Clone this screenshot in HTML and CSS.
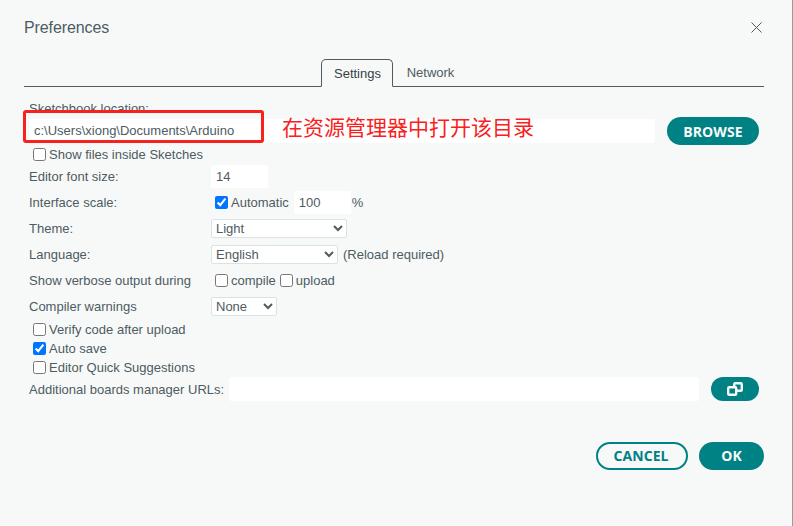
FILE: index.html
```html
<!DOCTYPE html>
<html lang="en">
<head>
  <meta charset="UTF-8"/>
  <title>Preferences</title>
  <link rel="stylesheet" href="styles.css">
</head>
<body>
  <div class="dialog">
    <header class="title-bar">
      <h1>Preferences</h1>
      <svg class="close-icon" width="11" height="11" viewBox="0 0 11 11">
        <path d="M.5.5l10 10M10.5.5l-10 10"/>
      </svg>
    </header>

    <nav class="tabs">
      <div class="tab active">Settings</div>
      <div class="tab network">Network</div>
    </nav>

    <main class="settings">
      <div class="location-label">Sketchbook location:</div>
      <div class="location-row">
        <input class="text-input location-input" type="text" value="c:\Users\xiong\Documents\Arduino">
        <button class="btn btn-primary browse-btn">BROWSE</button>
      </div>
      <label class="check-row first"><input type="checkbox"> Show files inside Sketches</label>

      <div class="row">
        <span class="row-label">Editor font size:</span>
        <input class="text-input small-input" type="text" value="14">
      </div>
      <div class="row">
        <span class="row-label">Interface scale:</span>
        <label class="inline-check"><input type="checkbox" checked> Automatic</label>
        <input class="text-input scale-input" type="text" value="100">
        <span class="percent">%</span>
      </div>
      <div class="row">
        <span class="row-label">Theme:</span>
        <select class="select theme-select"><option>Light</option></select>
      </div>
      <div class="row">
        <span class="row-label">Language:</span>
        <select class="select lang-select"><option>English</option></select>
        <span class="reload-note">(Reload required)</span>
      </div>
      <div class="row">
        <span class="row-label">Show verbose output during</span>
        <label class="inline-check"><input type="checkbox"> compile</label>
        <label class="inline-check upload"><input type="checkbox"> upload</label>
      </div>
      <div class="row">
        <span class="row-label">Compiler warnings</span>
        <select class="select warn-select"><option>None</option></select>
      </div>

      <div class="check-list">
        <label class="check-row"><input type="checkbox"> Verify code after upload</label>
        <label class="check-row"><input type="checkbox" checked> Auto save</label>
        <label class="check-row"><input type="checkbox"> Editor Quick Suggestions</label>
      </div>

      <div class="urls-row">
        <span class="urls-label">Additional boards manager URLs:</span>
        <input class="text-input urls-input" type="text">
        <button class="btn btn-primary icon-btn">
          <svg width="16" height="14" viewBox="0 0 16 14">
            <rect x="7.2" y="1.2" width="7.6" height="7.6" rx="1"/>
            <rect x="1.2" y="5.2" width="8" height="7.6" rx="1"/>
          </svg>
        </button>
      </div>
    </main>

    <footer class="actions">
      <button class="btn btn-outline">CANCEL</button>
      <button class="btn btn-primary ok-btn">OK</button>
    </footer>

    <!-- annotation drawn over the screenshot -->
    <div class="note-box"></div>
    <div class="note-text">在资源管理器中打开该目录</div>
  </div>
</body>
</html>
```

FILE: styles.css
```css
:root {
  --bg: #f7f9f9;
  --teal: #008184;
  --text: #4e5b61;
  --dark: #374146;
  --red: #f7211d;
}

* {
  box-sizing: border-box;
}

html, body {
  margin: 0;
  height: 100%;
}

body {
  background: var(--bg);
  color: var(--text);
  font-family: "Liberation Sans", Arial, sans-serif;
  font-size: 13px;
  overflow: hidden;
}

.dialog {
  position: relative;
  width: 793px;
  height: 526px;
  padding: 0 29px 0 24px;
  border-right: 1px solid #9a9a9a;
}

/* title */
.title-bar {
  display: flex;
  align-items: center;
  justify-content: space-between;
  height: 59px;
  padding-bottom: 5px;
  padding-right: 1px;
}
.title-bar h1 {
  margin: 2px 0 0;
  font-size: 16px;
  font-weight: 400;
  letter-spacing: -0.1px;
}
.close-icon path {
  fill: none;
  stroke: var(--text);
  stroke-width: 1;
}

/* tabs */
.tabs {
  display: flex;
  justify-content: center;
  height: 28px;
  width: 740px;
  border-bottom: 1px solid var(--text);
  padding-right: 3px;
}
.tab {
  width: 72px;
  height: 28px;
  line-height: 28px;
  text-align: center;
}
.tab.active {
  padding-left: 2px;
  color: var(--dark);
  background: var(--bg);
  border: 1px solid var(--text);
  border-bottom-color: var(--bg);
  border-radius: 5px 5px 0 0;
}
.tab.network {
  padding-left: 4px;
}

/* settings */
.settings {
  padding-left: 5px;
}
.location-label {
  height: 14px;
  margin-top: 15px;
  line-height: 14px;
}
.location-row {
  display: flex;
  align-items: center;
  height: 24px;
  margin-top: 3px;
}
.text-input {
  height: 24px;
  padding: 0 5px 2px;
  border: 0;
  border-radius: 2px;
  outline: 0;
  background: #fff;
  color: var(--text);
  font: inherit;
}
.location-input {
  width: 626px;
}
.browse-btn {
  width: 92px;
  height: 28px;
  margin-left: 12px;
}
.check-row {
  display: flex;
  align-items: center;
  gap: 3px;
  height: 19px;
  padding-left: 4px;
}
.check-row.first {
  height: 18px;
  margin-top: 2px;
}
input[type="checkbox"] {
  width: 13px;
  height: 13px;
  margin: 0;
}
.row {
  display: flex;
  align-items: center;
  height: 26px;
}
.row-label {
  width: 182px;
  flex-shrink: 0;
}
.inline-check {
  display: flex;
  align-items: center;
  gap: 3px;
  margin-left: 4px;
}
.small-input {
  width: 57px;
  height: 23px;
  margin-top: 1px;
  padding-bottom: 0;
}
.scale-input {
  width: 57px;
  height: 23px;
  margin: 1px 0 0 5px;
  padding-bottom: 0;
}
.percent {
  margin-left: 1px;
}
.select {
  height: 19px;
  padding: 0;
  border: 1px solid #dae3e3;
  border-radius: 2px;
  background: #fff;
  color: var(--text);
  font: inherit;
  outline: 0;
}
.theme-select {
  width: 136px;
}
.lang-select {
  width: 127px;
}
.warn-select {
  width: 66px;
}
.reload-note {
  margin-left: 5px;
}
.check-list {
  margin-top: 1px;
}
.urls-row {
  display: flex;
  align-items: center;
  height: 24px;
}
.urls-label {
  margin-right: 5px;
}
.urls-input {
  width: 470px;
}
.icon-btn {
  display: flex;
  align-items: center;
  justify-content: center;
  width: 48px;
  height: 24px;
  margin-left: 12px;
  padding: 1px 0 0;
}
.icon-btn rect {
  fill: var(--teal);
  stroke: #f7f9f9;
  stroke-width: 2.4;
}

/* buttons */
.btn {
  border-radius: 14px;
  font-family: "Open Sans", sans-serif;
  font-size: 14px;
  font-weight: 700;
  letter-spacing: 0.1px;
  padding: 0;
}
.btn-primary {
  border: 0;
  background: var(--teal);
  color: #f7f9f9;
}
.btn-outline {
  width: 92px;
  height: 28px;
  padding: 0 2px 1px 0;
  border: 2px solid var(--teal);
  background: transparent;
  color: var(--teal);
}
.actions {
  display: flex;
  justify-content: flex-end;
  gap: 11px;
  width: 740px;
  margin-top: 41px;
}
.ok-btn {
  width: 65px;
  height: 28px;
  padding-bottom: 1px;
}

/* red annotation */
.note-box {
  position: absolute;
  left: 23px;
  top: 110px;
  width: 241px;
  height: 33px;
  border: 3px solid var(--red);
  border-radius: 3px;
}
.note-text {
  position: absolute;
  left: 282px;
  top: 113px;
  color: var(--red);
  font-family: "Noto Sans CJK SC", sans-serif;
  font-size: 21px;
  line-height: 26px;
}
```
